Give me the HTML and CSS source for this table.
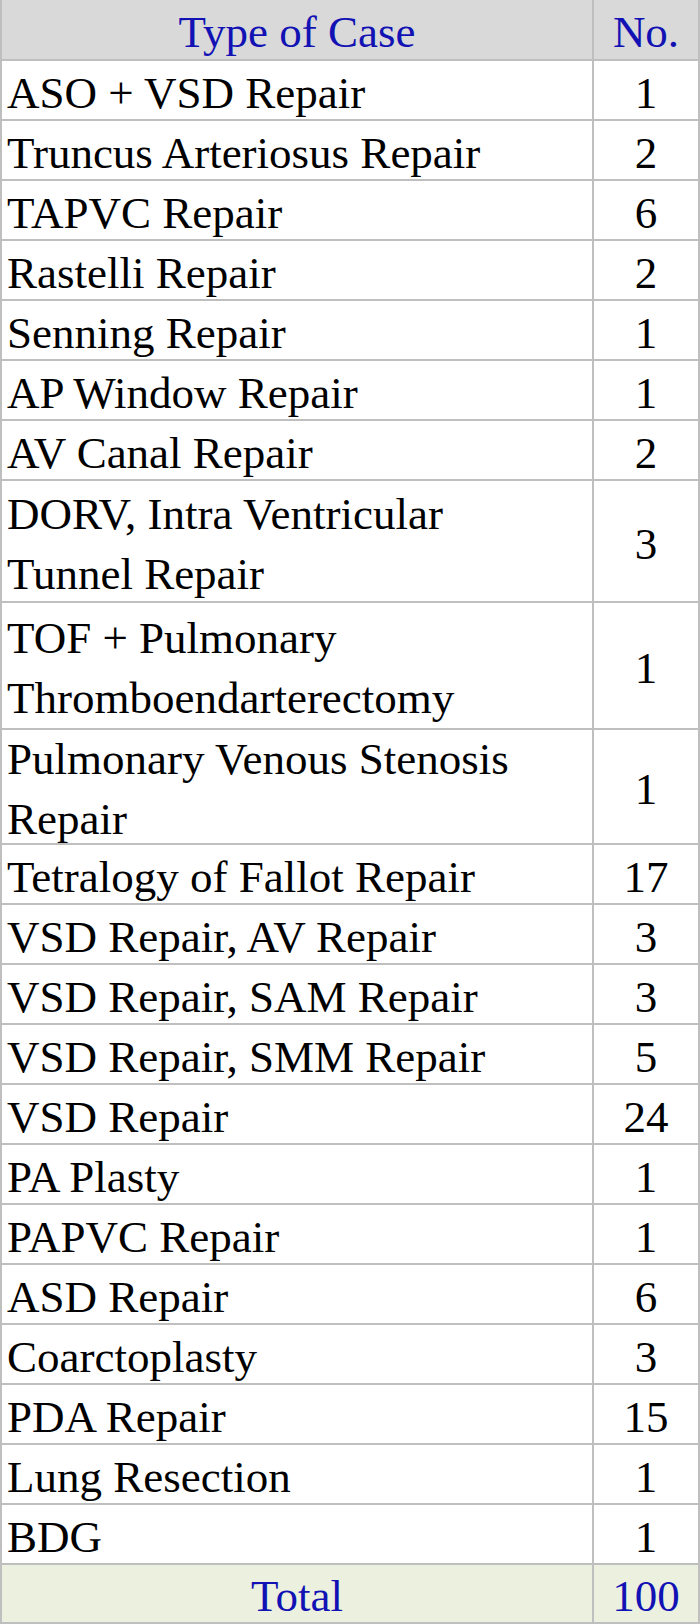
FILE: index.html
```html
<!DOCTYPE html>
<html lang="en">
<head>
<meta charset="utf-8">
<title>Type of Case</title>
<link rel="stylesheet" href="styles.css">
</head>
<body>
<div class="sheet">
  <div class="cell head label"><span>Type of Case</span></div>
  <div class="cell head num"><span>No.</span></div>

  <div class="cell"><span>ASO + VSD Repair</span></div>
  <div class="cell num"><span>1</span></div>
  <div class="cell"><span>Truncus Arteriosus Repair</span></div>
  <div class="cell num"><span>2</span></div>
  <div class="cell"><span>TAPVC Repair</span></div>
  <div class="cell num"><span>6</span></div>
  <div class="cell"><span>Rastelli Repair</span></div>
  <div class="cell num"><span>2</span></div>
  <div class="cell"><span>Senning Repair</span></div>
  <div class="cell num"><span>1</span></div>
  <div class="cell"><span>AP Window Repair</span></div>
  <div class="cell num"><span>1</span></div>
  <div class="cell"><span>AV Canal Repair</span></div>
  <div class="cell num"><span>2</span></div>

  <div class="cell h120"><span>DORV, Intra Ventricular<br>Tunnel Repair</span></div>
  <div class="cell num h120"><span>3</span></div>
  <div class="cell h125"><span>TOF + Pulmonary<br>Thromboendarterectomy</span></div>
  <div class="cell num h125"><span>1</span></div>
  <div class="cell h113"><span>Pulmonary Venous Stenosis<br>Repair</span></div>
  <div class="cell num h113"><span>1</span></div>

  <div class="cell"><span>Tetralogy of Fallot Repair</span></div>
  <div class="cell num"><span>17</span></div>
  <div class="cell"><span>VSD Repair, AV Repair</span></div>
  <div class="cell num"><span>3</span></div>
  <div class="cell"><span>VSD Repair, SAM Repair</span></div>
  <div class="cell num"><span>3</span></div>
  <div class="cell"><span>VSD Repair, SMM Repair</span></div>
  <div class="cell num"><span>5</span></div>
  <div class="cell"><span>VSD Repair</span></div>
  <div class="cell num"><span>24</span></div>
  <div class="cell"><span>PA Plasty</span></div>
  <div class="cell num"><span>1</span></div>
  <div class="cell"><span>PAPVC Repair</span></div>
  <div class="cell num"><span>1</span></div>
  <div class="cell"><span>ASD Repair</span></div>
  <div class="cell num"><span>6</span></div>
  <div class="cell"><span>Coarctoplasty</span></div>
  <div class="cell num"><span>3</span></div>
  <div class="cell"><span>PDA Repair</span></div>
  <div class="cell num"><span>15</span></div>
  <div class="cell"><span>Lung Resection</span></div>
  <div class="cell num"><span>1</span></div>
  <div class="cell"><span>BDG</span></div>
  <div class="cell num"><span>1</span></div>

  <div class="cell total label h57"><span>Total</span></div>
  <div class="cell total num h57"><span>100</span></div>
</div>
</body>
</html>
```

FILE: styles.css
```css
html, body {
  margin: 0;
  padding: 0;
  background: #ffffff;
}

.sheet {
  width: 700px;
  box-sizing: border-box;
  display: grid;
  grid-template-columns: 590px 104px;
  column-gap: 2px;
  row-gap: 2px;
  padding: 0 2px 2px 2px;
  background: #bfbfbf;
  font-family: "Liberation Serif", "Times New Roman", serif;
  font-size: 45px;
  line-height: 60px;
  color: #000000;
}

.cell {
  background: #ffffff;
  height: 58px;
  box-sizing: border-box;
  padding: 5px 6px 0 5px;
  display: flex;
  flex-direction: column;
  justify-content: center;
  overflow: hidden;
  white-space: nowrap;
}

.cell.head {
  height: 59px;
  background: #d9d9d9;
  color: #1212b4;
}

.cell.total {
  background: #ebf1de;
  color: #1212b4;
}

.cell.label,
.cell.num {
  align-items: center;
  text-align: center;
  padding-left: 0;
  padding-right: 0;
}

.cell.h120 { height: 120px; }
.cell.h125 { height: 125px; }
.cell.h113 { height: 113px; }
.cell.h57 { height: 57px; }
```
